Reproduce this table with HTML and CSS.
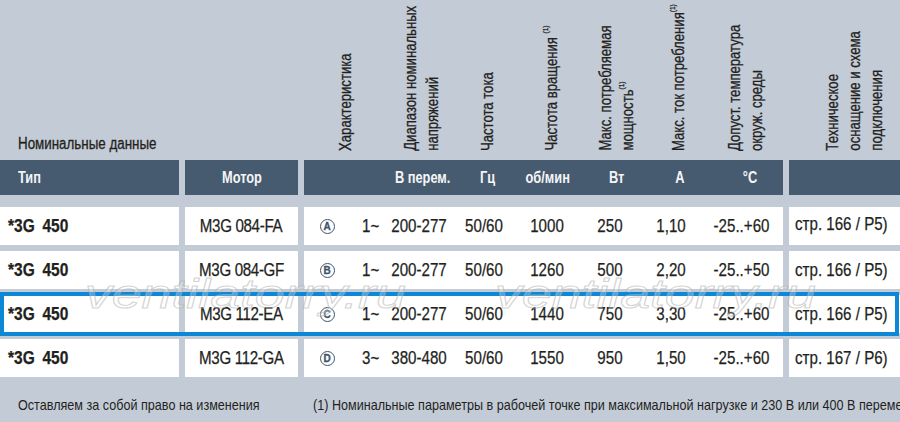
FILE: index.html
```html
<!DOCTYPE html>
<html lang="ru">
<head>
<meta charset="utf-8">
<title>Номинальные данные</title>
<link rel="stylesheet" href="styles.css">
</head>
<body>
<div class="page">
  <div class="heads">
    <div class="group"><span class="x xl">Номинальные данные</span></div>
    <div class="vl l-char">Характеристика</div>
    <div class="vl l-volt">Диапазон номинальных<br>напряжений</div>
    <div class="vl l-freq">Частота тока</div>
    <div class="vl l-speed">Частота вращения <sup>(1)</sup></div>
    <div class="vl l-power">Макс. потребляемая<br>мощность<sup>(1)</sup></div>
    <div class="vl l-cur">Макс. ток потребления<sup>(1)</sup></div>
    <div class="vl l-temp">Допуст. температура<br>окруж. среды</div>
    <div class="vl l-tech">Техническое<br>оснащение и схема<br>подключения</div>
  </div>

  <div class="bar">
    <div class="seg seg-type"><span class="x xl">Тип</span></div>
    <div class="seg seg-motor"><span class="x">Мотор</span></div>
    <div class="seg sub">
      <span></span><span></span>
      <span class="u u-range"><span class="x">В перем.</span></span>
      <span class="u u-freq"><span class="x">Гц</span></span>
      <span class="u u-speed"><span class="x">об/мин</span></span>
      <span class="u u-power"><span class="x">Вт</span></span>
      <span class="u u-cur"><span class="x">A</span></span>
      <span class="u u-temp"><span class="x">°C</span></span>
    </div>
    <div class="seg"></div>
  </div>

  <div class="rows">
    <div class="row">
      <div class="cell c-type"><span class="x xl">*3G 450</span></div>
      <div class="cell c-motor"><span class="x">M3G 084-FA</span></div>
      <div class="cell sub">
        <span class="v-char"><span class="badge">A</span></span>
        <span class="v-phase"><span class="x xl">1~</span></span>
        <span class="v">200-277</span>
        <span class="v">50/60</span>
        <span class="v">1000</span>
        <span class="v">250</span>
        <span class="v">1,10</span>
        <span class="v">-25..+60</span>
      </div>
      <div class="cell c-ref c-ref-first"><span class="x xl">стр. 166 / P5)</span></div>
    </div>
    <div class="row">
      <div class="cell c-type"><span class="x xl">*3G 450</span></div>
      <div class="cell c-motor"><span class="x">M3G 084-GF</span></div>
      <div class="cell sub">
        <span class="v-char"><span class="badge">B</span></span>
        <span class="v-phase"><span class="x xl">1~</span></span>
        <span class="v">200-277</span>
        <span class="v">50/60</span>
        <span class="v">1260</span>
        <span class="v">500</span>
        <span class="v">2,20</span>
        <span class="v">-25..+50</span>
      </div>
      <div class="cell c-ref"><span class="x xl">стр. 166 / P5)</span></div>
    </div>
    <div class="row">
      <div class="cell c-type"><span class="x xl">*3G 450</span></div>
      <div class="cell c-motor"><span class="x">M3G 112-EA</span></div>
      <div class="cell sub">
        <span class="v-char"><span class="badge">C</span></span>
        <span class="v-phase"><span class="x xl">1~</span></span>
        <span class="v">200-277</span>
        <span class="v">50/60</span>
        <span class="v">1440</span>
        <span class="v">750</span>
        <span class="v">3,30</span>
        <span class="v">-25..+60</span>
      </div>
      <div class="cell c-ref"><span class="x xl">стр. 166 / P5)</span></div>
    </div>
    <div class="row">
      <div class="cell c-type"><span class="x xl">*3G 450</span></div>
      <div class="cell c-motor"><span class="x">M3G 112-GA</span></div>
      <div class="cell sub">
        <span class="v-char"><span class="badge">D</span></span>
        <span class="v-phase"><span class="x xl">3~</span></span>
        <span class="v">380-480</span>
        <span class="v">50/60</span>
        <span class="v">1550</span>
        <span class="v">950</span>
        <span class="v">1,50</span>
        <span class="v">-25..+60</span>
      </div>
      <div class="cell c-ref"><span class="x xl">стр. 167 / P6)</span></div>
    </div>
  </div>

  <div class="foot">
    <span class="note"><span class="x xl">Оставляем за собой право на изменения</span></span>
    <span class="fn"><span class="x xl">(1) Номинальные параметры в рабочей точке при максимальной нагрузке и 230 В или 400 В переменного тока</span></span>
  </div>

  <div class="highlight"></div>
  <div class="mark mark-1">ventilatorry.ru</div>
  <div class="mark mark-2">ventilatorry.ru</div>
</div>
</body>
</html>
```

FILE: styles.css
```css
html, body {
  margin: 0;
  padding: 0;
}

body {
  background: #c3ccd6;
  width: 900px;
  height: 422px;
  overflow: hidden;
  font-family: "Liberation Sans", Arial, sans-serif;
  color: #231f1d;
}

.page {
  position: relative;
  width: 900px;
  height: 422px;
  overflow: hidden;
}

/* condensed look: Helvetica Condensed is not installed, so narrowed Liberation Sans */
.x {
  display: inline-block;
  white-space: nowrap;
  transform: scaleX(0.84);
  transform-origin: 50% 50%;
}

.xl { transform-origin: 0 50%; }

/* ---------- rotated header labels ---------- */
.heads {
  height: 160px;
  box-sizing: border-box;
  padding-bottom: 9px;
  display: flex;
  align-items: flex-end;
}

.group {
  width: 304px;
  flex: none;
  box-sizing: border-box;
  padding-left: 18px;
  font-size: 16px;
  line-height: 20px;
  margin-bottom: -3px;
  -webkit-text-stroke: 0.3px #231f1d;
}

.group .x { transform: scaleX(0.835); }

.vl {
  flex: none;
  writing-mode: vertical-rl;
  font-size: 16px;
  line-height: 22px;
  white-space: nowrap;
  -webkit-text-stroke: 0.3px #231f1d;
  transform-origin: 50% 100%;
  transform: scaleY(0.82) translateY(-100%) rotate(180deg);
}

.vl sup {
  font-size: 8px;
  line-height: 0;
}

.l-char  { margin-left: 31px; }
.l-volt  { margin-left: 43px; }
.l-freq  { margin-left: 33px; }
.l-speed { margin-left: 42px; }
.l-power { margin-left: 32px; }
.l-cur   { margin-left: 29px; }
.l-temp  { margin-left: 34px; }
.l-tech  { margin-left: 54px; }

/* ---------- shared column grid ---------- */
.bar, .row {
  display: grid;
  grid-template-columns: 179px 113px 479px 1fr;
  column-gap: 6px;
}

.sub {
  display: grid;
  grid-template-columns: 46px 36px 66px 64px 62px 64px 58px 83px;
  align-items: center;
}

/* ---------- dark header bar ---------- */
.bar {
  height: 35px;
  color: #f4f5f6;
  font-weight: bold;
  font-size: 16px;
}

.bar .x { transform: scaleX(0.8); }

.seg {
  background: #475b70;
  display: flex;
  align-items: center;
}

.seg.sub { display: grid; }

.seg-type { padding-left: 18px; }
.seg-motor { justify-content: center; }

.u { text-align: center; white-space: nowrap; }
.u-range { padding-left: 2px; }
.u-freq  { padding-left: 6px; }
.u-speed { padding-left: 2px; }
.u-power { padding-left: 14px; }
.u-cur   { padding-left: 18px; }
.u-temp  { padding-left: 16px; }

/* ---------- data rows ---------- */
.rows {
  margin-top: 12px;
  display: flex;
  flex-direction: column;
  gap: 6px;
}

.row {
  height: 38px;
  font-size: 18px;
  -webkit-text-stroke: 0.25px #231f1d;
}

.cell {
  background: #ffffff;
  display: flex;
  align-items: center;
}

.cell.sub { display: grid; }

.c-type {
  padding-left: 8px;
  font-weight: bold;
  word-spacing: 4px;
}

.c-type .x { transform: scaleX(0.86); }

.c-motor { justify-content: center; }
.c-motor .x { letter-spacing: -0.4px; }

.c-ref { padding-left: 6px; }
.c-ref-first { padding-bottom: 4px; }

.v {
  text-align: center;
  white-space: nowrap;
  transform: scaleX(0.84);
}

.v-phase { padding-left: 12px; }
.v-char { display: flex; justify-content: center; }

.badge {
  width: 13px;
  height: 13px;
  border: 1.5px solid #3f536a;
  border-radius: 50%;
  color: #3f536a;
  font-size: 10px;
  font-weight: bold;
  line-height: 13px;
  text-align: center;
  -webkit-text-stroke: 0.3px #3f536a;
}

/* ---------- footer ---------- */
.foot {
  padding: 18px 0 0 18px;
  display: flex;
  font-size: 15px;
  line-height: 20px;
  white-space: nowrap;
}

.note {
  width: 295px;
  flex: none;
}

/* ---------- overlays ---------- */
.highlight {
  position: absolute;
  left: 0;
  top: 292px;
  width: 899px;
  height: 44px;
  box-sizing: border-box;
  border: 4px solid #0c88d6;
}

.mark {
  position: absolute;
  top: 274px;
  font-style: italic;
  font-size: 40px;
  line-height: 40px;
  white-space: nowrap;
  color: rgba(255, 255, 255, 0.25);
  -webkit-text-stroke: 1px rgba(175, 175, 175, 0.55);
  transform: scaleX(1.34);
  transform-origin: left top;
  pointer-events: none;
}

.mark-1 { left: 85px; }
.mark-2 { left: 495px; }
```
